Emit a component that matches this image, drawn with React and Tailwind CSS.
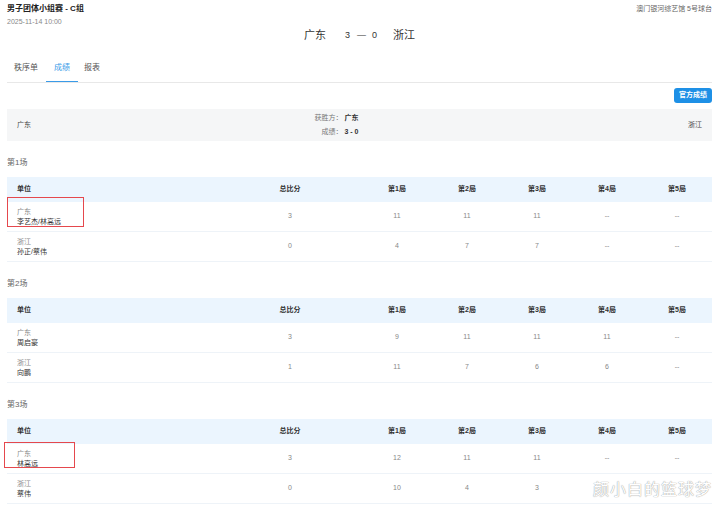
import React from "react";

const matches = [
  {
    title: "第1场",
    rows: [
      { team: "广东", name: "李艺杰/林高远", total: 3, games: ["11", "11", "11", "--", "--"], mark: "first" },
      { team: "浙江", name: "孙正/蔡伟", total: 0, games: ["4", "7", "7", "--", "--"] },
    ],
  },
  {
    title: "第2场",
    rows: [
      { team: "广东", name: "周启豪", total: 3, games: ["9", "11", "11", "11", "--"] },
      { team: "浙江", name: "向鹏", total: 1, games: ["11", "7", "6", "6", "--"] },
    ],
  },
  {
    title: "第3场",
    rows: [
      { team: "广东", name: "林高远", total: 3, games: ["12", "11", "11", "--", "--"], mark: "third" },
      { team: "浙江", name: "蔡伟", total: 0, games: ["10", "4", "3", "", ""] },
    ],
  },
];

const cols = "grid grid-cols-[211px_144px_repeat(5,1fr)]";

const MatchTable = ({ match }) => {
  const { title, rows } = match;
  return (
    <div>
      <div className="mt-[14px] mb-[6px] h-[16px] leading-[16px] text-[8px] text-[#666]">{title}</div>
      <div className={`${cols} h-[25px] items-center bg-[#ebf5fe] text-[7px] font-bold text-[#333]`}>
        <div className="pl-[10px]">单位</div>
        <div className="text-center">总比分</div>
        {["第1局", "第2局", "第3局", "第4局", "第5局"].map((g) => (
          <div key={g} className="text-center">
            {g}
          </div>
        ))}
      </div>
      {rows.map((r, i) => (
        <div key={i} className={`${cols} relative h-[30px] items-center border-b border-[#eef3f8] text-[7px]`}>
          <div className="pl-[10px] leading-[10px]">
            <div className="text-[#888]">{r.team}</div>
            <div className="text-[#333]">{r.name}</div>
          </div>
          <div className="text-center text-[#888]">{r.total}</div>
          {r.games.map((g, j) => (
            <div key={j} className="text-center text-[#888]">
              {g}
            </div>
          ))}
          {/* highlight boxes */}
          {r.mark === "first" && (
            <div className="absolute left-0 top-[-5px] h-[30px] w-[77px] border-[1.5px] border-[#e5484d]" />
          )}
          {r.mark === "third" && (
            <div className="absolute left-[-3px] top-[-2px] h-[26px] w-[71px] border-[1.5px] border-[#e5484d]" />
          )}
        </div>
      ))}
    </div>
  );
};

export default function App() {
  return (
    <div className="relative w-[719px] h-[508px] overflow-hidden bg-white px-[7px] font-['Liberation_Sans','Noto_Sans_CJK_SC',sans-serif]">
      {/* header */}
      <div className="flex items-start justify-between pt-[3px]">
        <div className="text-[8px] font-bold leading-[11px] text-[#222]">男子团体小组赛 - C组</div>
        <div className="text-[7px] leading-[11px] text-[#666]">澳门银河综艺馆 5号球台</div>
      </div>
      <div className="mt-[3px] text-[7px] leading-[10px] text-[#888]">2025-11-14 10:00</div>
      <div className="mt-[1px] flex h-[15px] items-center justify-center text-[11px] text-[#333]">
        <span>广东</span>
        <span className="ml-[19px] text-[9px]">3</span>
        <span className="ml-[7px] text-[9px]">—</span>
        <span className="ml-[6px] text-[9px]">0</span>
        <span className="ml-[16px]">浙江</span>
      </div>

      {/* tabs */}
      <div className="mt-[19px] flex border-b border-[#e8e8e8] text-[8px]">
        <div className="px-[7px] pb-[8px] text-[#555]">秩序单</div>
        <div className="mx-[1px] border-b-[1.5px] border-[#3a9be8] px-[8px] pb-[7px] text-[#3a9be8]">成绩</div>
        <div className="px-[5px] pb-[8px] text-[#555]">报表</div>
      </div>

      {/* official result button */}
      <div className="mt-[5px] flex justify-end">
        <div className="flex h-[15px] items-center rounded-[3px] bg-[#1e90e6] px-[5px] text-[7px] font-bold text-white">
          官方成绩
        </div>
      </div>

      {/* summary */}
      <div className="mt-[6px] mb-[1px] grid h-[32px] grid-cols-2 items-center bg-[#f5f6f7] text-[7px]">
        <div className="flex items-center justify-between pl-[10px] pr-[1px]">
          <div className="text-[#444]">广东</div>
          <div className="flex flex-col items-end leading-[14px] text-[#777]">
            <div>
              获胜方： <span className="font-bold text-[#333]">广东</span>
            </div>
            <div>
              成绩： <span className="font-bold text-[#333]">3 - 0</span>
            </div>
          </div>
        </div>
        <div className="pr-[10px] text-right text-[#444]">浙江</div>
      </div>

      {matches.map((m) => (
        <MatchTable key={m.title} match={m} />
      ))}

      {/* watermark */}
      <div className="absolute bottom-[8px] right-[7px] text-[16px] tracking-[1px] text-white [text-shadow:0_0_1px_#999,0_0_1px_#bbb] font-['Noto_Sans_CJK_SC',sans-serif]">
        颜小白的篮球梦
      </div>
    </div>
  );
}
